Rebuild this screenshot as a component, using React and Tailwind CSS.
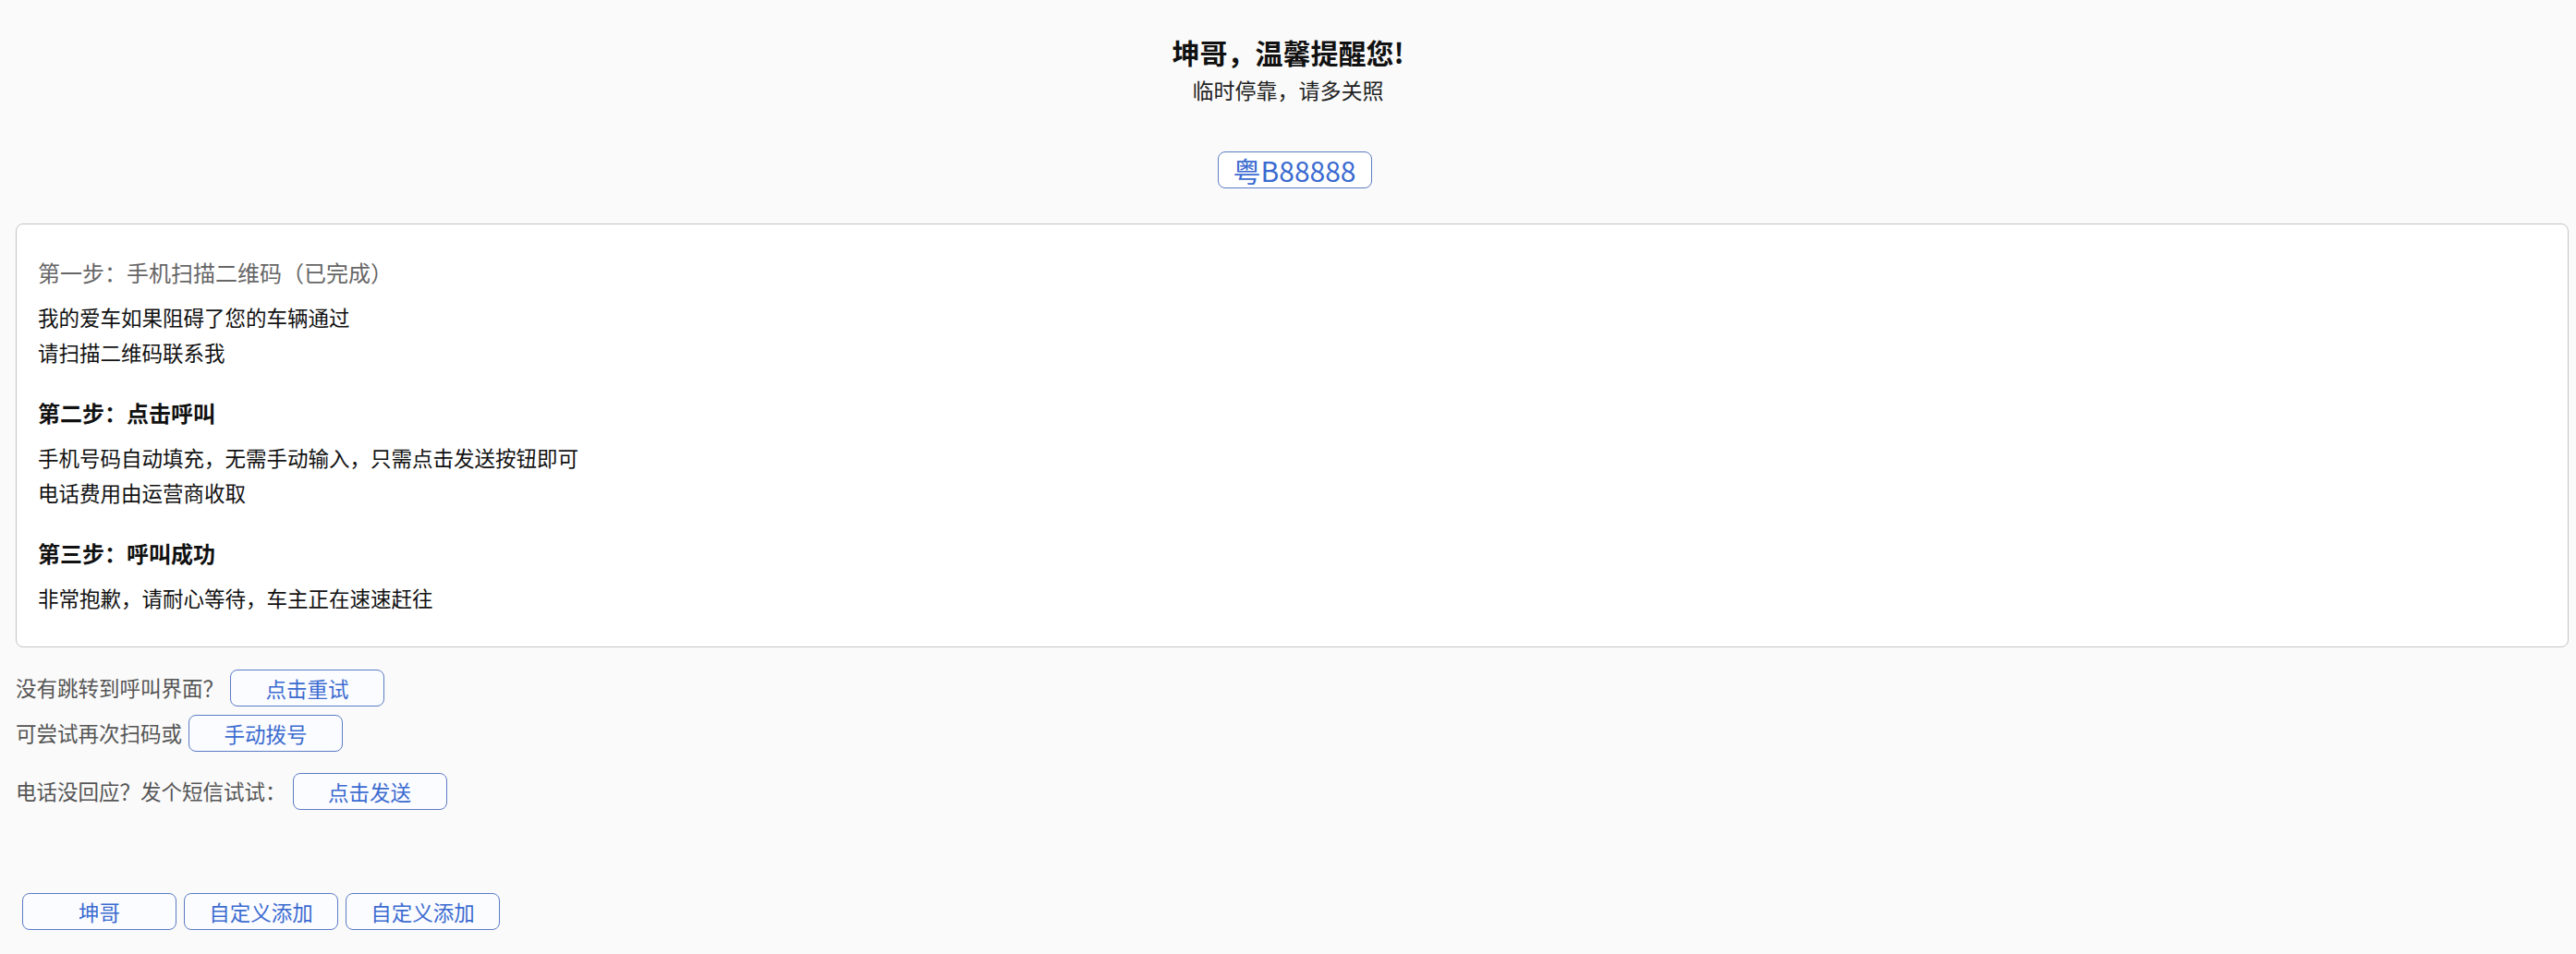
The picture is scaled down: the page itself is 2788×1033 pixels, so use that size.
const font = { fontFamily: '"Noto Sans CJK SC", "Noto Sans", sans-serif' };

const steps = [
  {
    title: '第一步：手机扫描二维码（已完成）',
    done: true,
    lines: ['我的爱车如果阻碍了您的车辆通过', '请扫描二维码联系我']
  },
  {
    title: '第二步：点击呼叫',
    lines: ['手机号码自动填充，无需手动输入，只需点击发送按钮即可', '电话费用由运营商收取']
  },
  {
    title: '第三步：呼叫成功',
    lines: ['非常抱歉，请耐心等待，车主正在速速赶往']
  }
];

const OutlineButton = ({ children }) => (
  <button
    type="button"
    className="h-[40px] w-[167px] shrink-0 rounded-[8px] border border-[#5b7cc4] bg-[#fbfcff] text-[22.5px] leading-none text-[#3b6bd0]"
  >
    {children}
  </button>
);

export default function App() {
  return (
    <div className="min-h-screen bg-[#fafafa] pb-[26px]" style={font}>
      <div className="pt-[38px] text-center">
        <h1 className="text-[30px] font-bold leading-[36px] text-[#111]">坤哥，温馨提醒您!</h1>
        <p className="mt-[8px] text-[23px] leading-[30px] text-[#222]">临时停靠，请多关照</p>
        <div className="mt-[52px] flex justify-center pl-[14px]">
          <span className="flex h-[40px] w-[167px] items-center justify-center rounded-[8px] border border-[#5b7cc4] bg-white text-[30px] leading-none text-[#3b6bd0]">
            粤B88888
          </span>
        </div>
      </div>

      <div className="ml-[17px] mr-[8px] mt-[38px] rounded-[8px] border border-[#c4c4c4] bg-white pb-[34px] pl-[23px] pr-[23px] pt-[33px]">
        {steps.map((step, i) => (
          <div key={i} className={i < steps.length - 1 ? 'mb-[28px]' : ''}>
            <p
              className={`text-[24px] leading-[38px] ${
                step.done ? 'font-normal text-[#666]' : 'font-bold text-[#111]'
              }`}
            >
              {step.title}
            </p>
            <div className="mt-[10px] text-[22.5px] leading-[38px] text-[#111]">
              {step.lines.map((line) => (
                <p key={line}>{line}</p>
              ))}
            </div>
          </div>
        ))}
      </div>

      <div className="ml-[17px] mt-[24px] text-[22.5px] text-[#555]">
        <div className="flex items-center gap-[7px]">
          <span>没有跳转到呼叫界面？</span>
          <OutlineButton>点击重试</OutlineButton>
        </div>
        <div className="mt-[9px] flex items-center gap-[7px]">
          <span>可尝试再次扫码或</span>
          <OutlineButton>手动拨号</OutlineButton>
        </div>
        <div className="mt-[23px] flex items-center gap-[7px]">
          <span>电话没回应？发个短信试试：</span>
          <OutlineButton>点击发送</OutlineButton>
        </div>
      </div>

      <div className="ml-[24px] mt-[90px] flex gap-[8px]">
        <OutlineButton>坤哥</OutlineButton>
        <OutlineButton>自定义添加</OutlineButton>
        <OutlineButton>自定义添加</OutlineButton>
      </div>
    </div>
  );
}
